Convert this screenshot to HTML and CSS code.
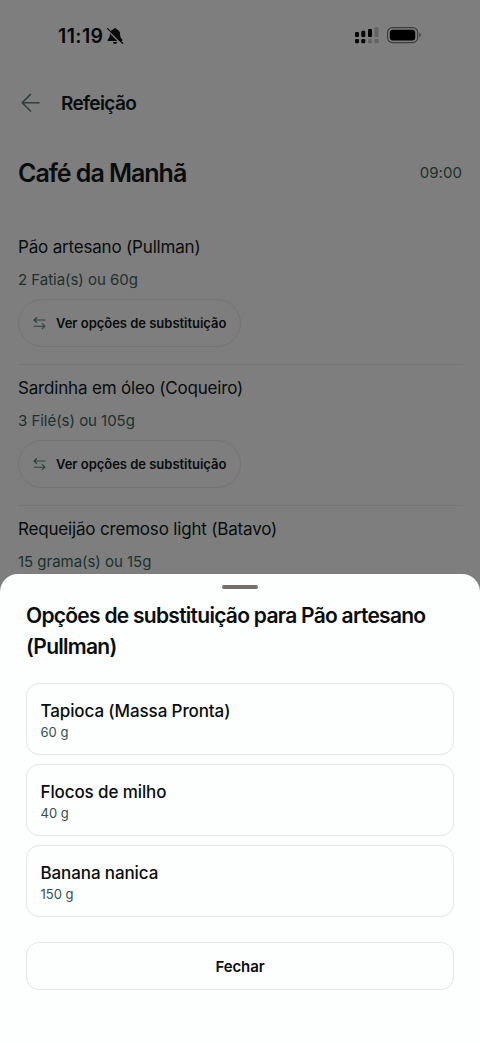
FILE: index.html
```html
<!DOCTYPE html>
<html lang="pt-BR">
<head>
<meta charset="utf-8">
<meta name="viewport" content="width=device-width, initial-scale=1">
<title>Refeição</title>
<link rel="stylesheet" href="styles.css">
</head>
<body>
<div class="phone">
  <div class="status">
    <div class="clock"><span class="time">11:19</span>
      <svg class="bell" width="18" height="18" viewBox="0 0 18 18"><path d="M9 1.2C7.8 1.2 7.3 1.9 7.1 2.5 4.800 3.200 4 5 3.900 7.300 3.800 10 3 11.200 1.800 12.500 1.200 13.400 1.600 14 2.400 14H15.600C16.400 14 16.800 13.400 16.200 12.500 15 11.200 14.200 10 14.100 7.300 14 5 13.200 3.200 10.900 2.500 10.700 1.900 10.200 1.200 9 1.200ZM6.900 15H11.100C10.800 16.300 10.100 16.900 9 16.900S7.200 16.300 6.900 15Z" fill="#0a0a0a"/><path d="M1.200 2.800 15.600 17.200" stroke="#7e7e7e" stroke-width="1.600"/><path d="M1.600 1.600 16.600 16.300" stroke="#0a0a0a" stroke-width="1.300" stroke-linecap="round"/></svg>
    </div>
    <div class="indicators">
      <svg width="24" height="17" viewBox="0 0 24 17"><g fill="#000"><rect x="0" y="5" width="4" height="5" rx="1.200"/><rect x="6.300" y="3.800" width="4" height="6.200" rx="1.200"/><rect x="13" y="2" width="4" height="8" rx="1.200"/><rect x="0" y="12" width="4" height="4.300" rx="1.200"/><rect x="6.300" y="12" width="4" height="4.300" rx="1.200"/></g><g fill="#636363"><rect x="19.500" y="0.300" width="4" height="9.700" rx="1.200"/><rect x="13" y="12" width="4" height="4.300" rx="1.200"/><rect x="19.500" y="12" width="4" height="4.300" rx="1.200"/></g></svg>
      <svg width="35" height="17" viewBox="0 0 35 17"><rect x="0.600" y="0.600" width="30" height="15" rx="4.800" fill="none" stroke="#3c3c3c" stroke-width="1.100"/><rect x="2.800" y="2.800" width="25.400" height="10.600" rx="3" fill="#000"/><path d="M32.300 5.800C34.300 6.600 34.300 9.600 32.300 10.400Z" fill="#3c3c3c"/></svg>
    </div>
  </div>
  <header class="topbar">
    <svg width="20" height="20" viewBox="0 0 20 20" fill="none" stroke="#2c403e" stroke-width="1.600" stroke-linecap="round" stroke-linejoin="round"><path d="M18 9.700H1.200M9.500 1.400 1.200 9.700 9.500 18"/></svg>
    <span class="screen-name">Refeição</span>
  </header>
  <div class="meal"><h1 class="meal-name">Café da Manhã</h1><span class="meal-time">09:00</span></div>
  <main class="foods">
    <section class="food">
      <div class="food-name">Pão artesano (Pullman)</div>
      <div class="food-amount">2 Fatia(s) ou 60g</div>
      <button class="swap"><svg class="swap-icon" width="13" height="14" viewBox="0 0 13 14"><path d="M12 4H1M3.700 1.500 1 4 3.700 6.500M1 10.200H12M9.300 7.700 12 10.200 9.300 12.700"/></svg><span>Ver opções de substituição</span></button>
    </section>
    <section class="food">
      <div class="food-name">Sardinha em óleo (Coqueiro)</div>
      <div class="food-amount">3 Filé(s) ou 105g</div>
      <button class="swap"><svg class="swap-icon" width="13" height="14" viewBox="0 0 13 14"><path d="M12 4H1M3.700 1.500 1 4 3.700 6.500M1 10.200H12M9.300 7.700 12 10.200 9.300 12.700"/></svg><span>Ver opções de substituição</span></button>
    </section>
    <section class="food">
      <div class="food-name">Requeijão cremoso light (Batavo)</div>
      <div class="food-amount">15 grama(s) ou 15g</div>
    </section>
  </main>
  <div class="sheet">
    <div class="handle"></div>
    <h2 class="sheet-title">Opções de substituição para Pão artesano (Pullman)</h2>
    <div class="options">
      <div class="option"><div class="option-name">Tapioca (Massa Pronta)</div><div class="option-amount">60 g</div></div>
      <div class="option"><div class="option-name">Flocos de milho</div><div class="option-amount">40 g</div></div>
      <div class="option"><div class="option-name">Banana nanica</div><div class="option-amount">150 g</div></div>
    </div>
    <button class="close">Fechar</button>
  </div>
</div>
</body>
</html>
```
FILE: styles.css
```css
* { box-sizing: border-box; }
body { margin: 0; font-family: Inter, "Liberation Sans", sans-serif; color: #080d0c; }
h1, h2 { margin: 0; }
button { font-family: inherit; color: inherit; background: transparent; }
svg { display: block; flex: none; }
.phone { position: relative; width: 480px; height: 1043px; overflow: hidden; background: #7e7e7e; }
.status { display: flex; justify-content: space-between; height: 72px; padding: 26px 58px 0 58px; }
.clock { display: flex; height: 20px; align-items: center; gap: 3px; }
.time { font-size: 19.500px; font-weight: 600; letter-spacing: 0.400px; color: #050505; }
.indicators { display: flex; gap: 8px; padding-top: 1px; }
.topbar { display: flex; align-items: center; gap: 20px; height: 62px; padding-left: 21px; }
.screen-name { font-size: 19px; font-weight: 600; letter-spacing: -0.650px; }
.meal { display: flex; justify-content: space-between; align-items: center; height: 78px; padding: 0 18px; }
.meal-name { font-size: 25px; font-weight: 600; letter-spacing: -1.030px; }
.meal-time { padding-bottom: 1px; font-size: 15px; color: #1c302e; letter-spacing: 0.050px; }
.foods { padding: 12.300px 17px 0 18px; }
.food { height: 140.800px; padding-top: 10px; border-bottom: 1px solid #727675; }
.food-name { font-size: 17px; line-height: 26px; letter-spacing: -0.180px; white-space: nowrap; }
.food-amount { margin-top: 9px; font-size: 15px; line-height: 22px; letter-spacing: -0.030px; color: #1c302e; }
.swap { display: flex; align-items: center; gap: 10px; width: 223px; height: 48px; margin: 8px 0 0; padding: 0 0 0 14px; border: 1px solid #727675; border-radius: 24px; font-size: 13px; font-weight: 600; letter-spacing: -0.020px; white-space: nowrap; }
.swap-icon { fill: none; stroke: #2c403e; stroke-width: 1.100; stroke-linecap: round; stroke-linejoin: round; }
.sheet { position: absolute; left: 0; right: 0; top: 574px; bottom: 0; padding: 11px 26px 0; border-radius: 18px 18px 0 0; background: #fdfefe; }
.handle { width: 36px; height: 4px; margin: 0 auto; border-radius: 2px; background: #73706c; }
.sheet-title { margin-top: 12px; font-size: 21px; line-height: 30.500px; font-weight: 600; letter-spacing: -0.730px; }
.options { display: grid; gap: 8.800px; margin-top: 21px; }
.option { height: 72px; padding: 15px 14px 0 13.500px; border: 1px solid #e2e7e7; border-radius: 13px; }
.option-name { font-size: 17px; line-height: 24px; font-weight: 500; letter-spacing: -0.110px; }
.option-amount { font-size: 13px; line-height: 18px; color: #36504e; }
.close { display: block; width: 100%; height: 48px; margin-top: 25.700px; padding: 0; border: 1px solid #e2e7e7; border-radius: 13px; font-size: 15px; font-weight: 600; letter-spacing: -0.080px; }
```
